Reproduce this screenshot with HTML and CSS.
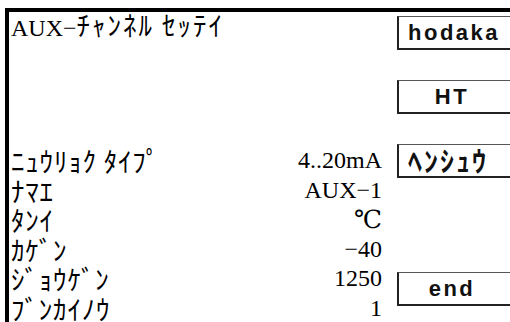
FILE: index.html
```html
<!DOCTYPE html>
<html lang="ja">
<head>
    <meta charset="UTF-8">
    <meta name="viewport" content="width=device-width, initial-scale=1.0">
    <title>AUX Channel Settings</title>
    <link rel="stylesheet" href="styles.css">
</head>
<body>
    <!-- Screen frame -->
    <div class="screen">
        <!-- Left side: title and settings list -->
        <div class="panel">
            <h1 class="title">AUX−<span class="kana">ﾁｬﾝﾈﾙ ｾｯﾃｲ</span></h1>

            <div class="settings">
                <div class="label">ﾆｭｳﾘｮｸ ﾀｲﾌﾟ</div>
                <div class="value">4..20mA</div>

                <div class="label">ﾅﾏｴ</div>
                <div class="value">AUX−1</div>

                <div class="label">ﾀﾝｲ</div>
                <div class="value unit">℃</div>

                <div class="label">ｶｹﾞﾝ</div>
                <div class="value">−40</div>

                <div class="label">ｼﾞｮｳｹﾞﾝ</div>
                <div class="value">1250</div>

                <div class="label">ﾌﾞﾝｶｲﾉｳ</div>
                <div class="value">1</div>
            </div>
        </div>

        <!-- Right side: soft keys -->
        <div class="keys">
            <div class="key key-left">hodaka</div>
            <div class="key">HT</div>
            <div class="key key-left key-kana">ﾍﾝｼｭｳ</div>
            <div class="key key-empty"></div>
            <div class="key">end</div>
        </div>
    </div>
</body>
</html>
```

FILE: styles.css
```css
/* General Styles */
body {
    margin: 0;
    padding: 0;
    background-color: #fff;
    color: #000;
    font-family: "Liberation Serif", "Noto Sans CJK JP", serif;
    overflow: hidden;
}

/* Screen frame: thick black line on top and left */
.screen {
    margin: 8px 0 0 5px;
    height: 310px;
    border-top: 4px solid #000;
    border-left: 4px solid #000;
    display: flex;
    gap: 15px;
    overflow: hidden;
}

/* Left Panel */
.panel {
    flex: 0 0 371px;
    padding-left: 2px;
}

.title {
    margin: 0;
    font-size: 24px;
    font-weight: normal;
    line-height: 26px;
    white-space: nowrap;
}

.kana,
.label {
    font-family: "Noto Sans CJK JP", sans-serif;
    font-weight: normal;
}

.kana {
    font-size: 27px;
    line-height: 26px;
    letter-spacing: 2px;
}

/* Settings list */
.settings {
    margin-top: 105px;
    display: grid;
    grid-template-columns: 1fr auto;
    grid-auto-rows: 29.6px;
    font-size: 24px;
    line-height: 29.6px;
}

.label {
    font-size: 27px;
    letter-spacing: 0.8px;
    white-space: nowrap;
}

.value {
    text-align: right;
}

.unit {
    font-family: "DejaVu Serif", "Liberation Serif", serif;
    font-size: 25px;
}

/* Soft Keys */
.keys {
    flex: 0 0 auto;
    padding-top: 4px;
    display: flex;
    flex-direction: column;
    gap: 30px;
}

.key {
    width: 106px;
    height: 31px;
    border-top: 1px solid #555;
    border-left: 2px solid #222;
    border-bottom: 2px solid #222;
    border-right: 1px solid #555;
    font-family: "Liberation Sans", Arial, sans-serif;
    font-weight: bold;
    font-size: 22px;
    line-height: 31px;
    letter-spacing: 2.5px;
    text-align: center;
    padding-right: 8px;
    color: #111;
}

.key-left {
    text-align: left;
    padding-left: 9px;
    padding-right: 0;
}

.key-kana {
    font-family: "Noto Sans CJK JP", sans-serif;
    font-size: 28px;
    letter-spacing: 2px;
}

.key-empty {
    visibility: hidden;
}
```
